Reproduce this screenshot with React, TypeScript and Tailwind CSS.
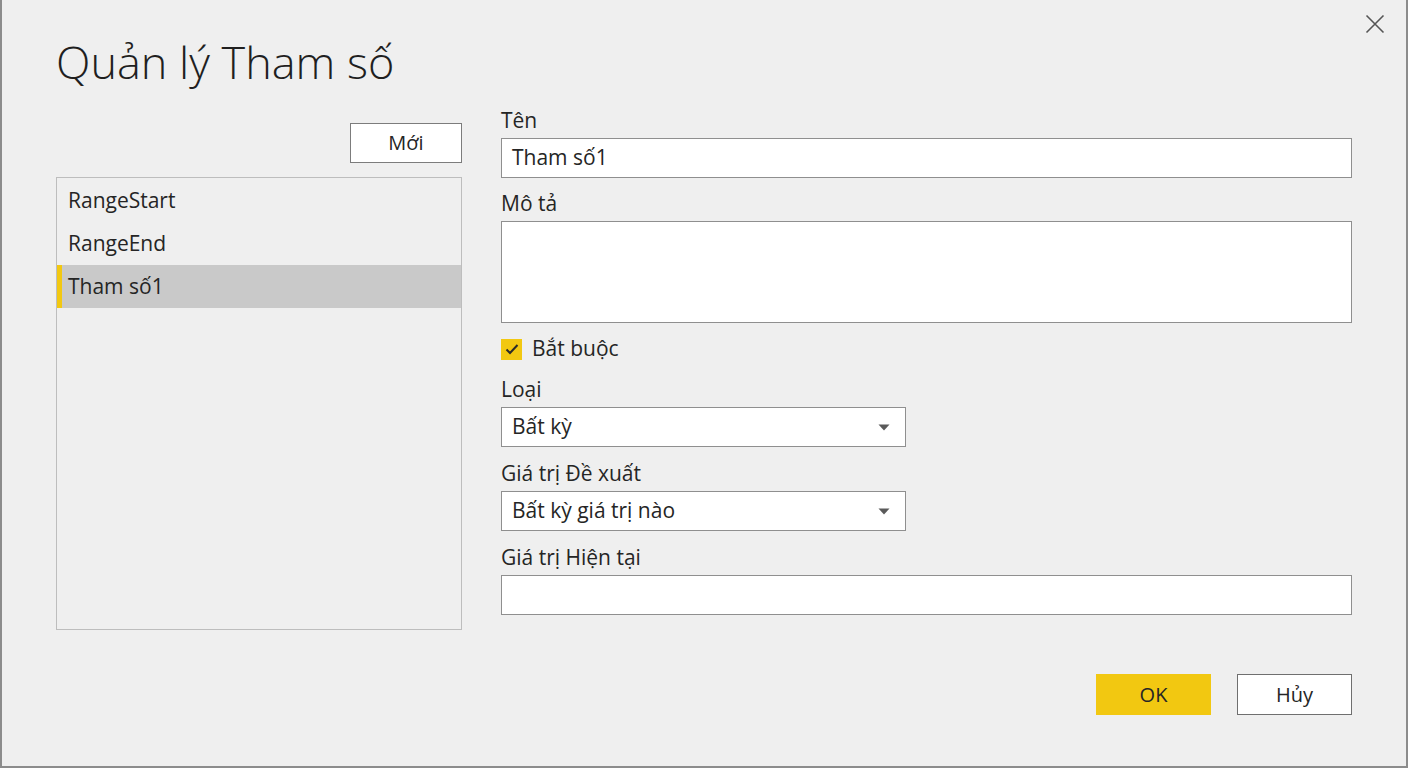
import React from 'react';

const params = ['RangeStart', 'RangeEnd', 'Tham số1'];

const Caret = () => (
  <svg width="12" height="7" viewBox="0 0 12 7" className="shrink-0">
    <path d="M0.5 0.5 L11.5 0.5 L6 6.5 Z" fill="#5a5a5a" />
  </svg>
);

const Label: React.FC<{ text: string; className?: string }> = ({ text, className = '' }) => (
  <div className={`h-[28px] leading-[28px] text-[21px] text-[#252525] ${className}`}>{text}</div>
);

const Select: React.FC<{ value: string }> = ({ value }) => (
  <div className="mt-1 flex h-[40px] w-[405px] items-center justify-between border border-[#8f8f8f] bg-white pl-[10px] pr-[15px] text-[21px] text-[#252525]">
    <span>{value}</span>
    <Caret />
  </div>
);

export default function App() {
  const selected = 'Tham số1';

  return (
    <div
      className="relative flex h-[768px] w-[1408px] flex-col border-x-2 border-b-2 border-[#8c8c8c] bg-[#efefef]"
      style={{ fontFamily: '"Open Sans", "Noto Sans", sans-serif' }}
    >
      {/* close button */}
      <button className="absolute right-[20px] top-[13px] flex h-[22px] w-[22px] items-center justify-center">
        <svg width="20" height="20" viewBox="0 0 20 20">
          <path d="M1.5 1.5 L18.5 18.5 M18.5 1.5 L1.5 18.5" stroke="#555" strokeWidth="1.6" fill="none" />
        </svg>
      </button>

      <h1 className="h-[106px] pl-[54px] pt-[34px] text-[45px] font-light leading-[56px] text-[#1f1f1f]">
        Quản lý Tham số
      </h1>

      <div className="flex gap-[39px] pl-[54px]">
        {/* parameter list */}
        <div className="flex w-[406px] flex-col">
          <div className="flex justify-end pt-[17px]">
            <button className="h-[40px] w-[112px] border border-[#7c7c7c] bg-white text-[20px] text-[#252525]">
              Mới
            </button>
          </div>
          <div className="mt-[14px] h-[453px] border border-[#bdbdbd] bg-[#efefef] pt-[1px]">
            {params.map((p) => (
              <div
                key={p}
                className={`flex h-[43px] items-center text-[21px] text-[#252525] ${
                  p === selected ? 'border-l-[5px] border-[#f2c811] bg-[#c9c9c9] pl-[6px]' : 'pl-[11px]'
                }`}
              >
                {p}
              </div>
            ))}
          </div>
        </div>

        {/* parameter details */}
        <div className="flex w-[851px] flex-col">
          <Label text="Tên" />
          <div className="mt-1 flex h-[40px] items-center border border-[#8f8f8f] bg-white pl-[10px] text-[21px] text-[#252525]">
            Tham số1
          </div>

          <Label text="Mô tả" className="mt-[11px]" />
          <div className="mt-1 h-[102px] border border-[#8f8f8f] bg-white" />

          <div className="mt-[12px] flex h-[28px] items-center gap-[10px]">
            <span className="flex h-[21px] w-[21px] items-center justify-center bg-[#f2c811]">
              <svg width="16" height="16" viewBox="0 0 16 16">
                <path d="M2.5 8.5 L6 12 L13.5 4" stroke="#2a2a2a" strokeWidth="2" fill="none" />
              </svg>
            </span>
            <span className="text-[21px] text-[#252525]">Bắt buộc</span>
          </div>

          <Label text="Loại" className="mt-[12px]" />
          <Select value="Bất kỳ" />

          <Label text="Giá trị Đề xuất" className="mt-[12px]" />
          <Select value="Bất kỳ giá trị nào" />

          <Label text="Giá trị Hiện tại" className="mt-[12px]" />
          <div className="mt-1 h-[40px] border border-[#8f8f8f] bg-white" />

          <div className="mt-[59px] flex justify-end gap-[26px]">
            <button className="h-[41px] w-[115px] bg-[#f2c811] text-[20px] text-[#252525]">OK</button>
            <button className="h-[41px] w-[115px] border border-[#6f6f6f] bg-white text-[20px] text-[#252525]">
              Hủy
            </button>
          </div>
        </div>
      </div>
    </div>
  );
}
